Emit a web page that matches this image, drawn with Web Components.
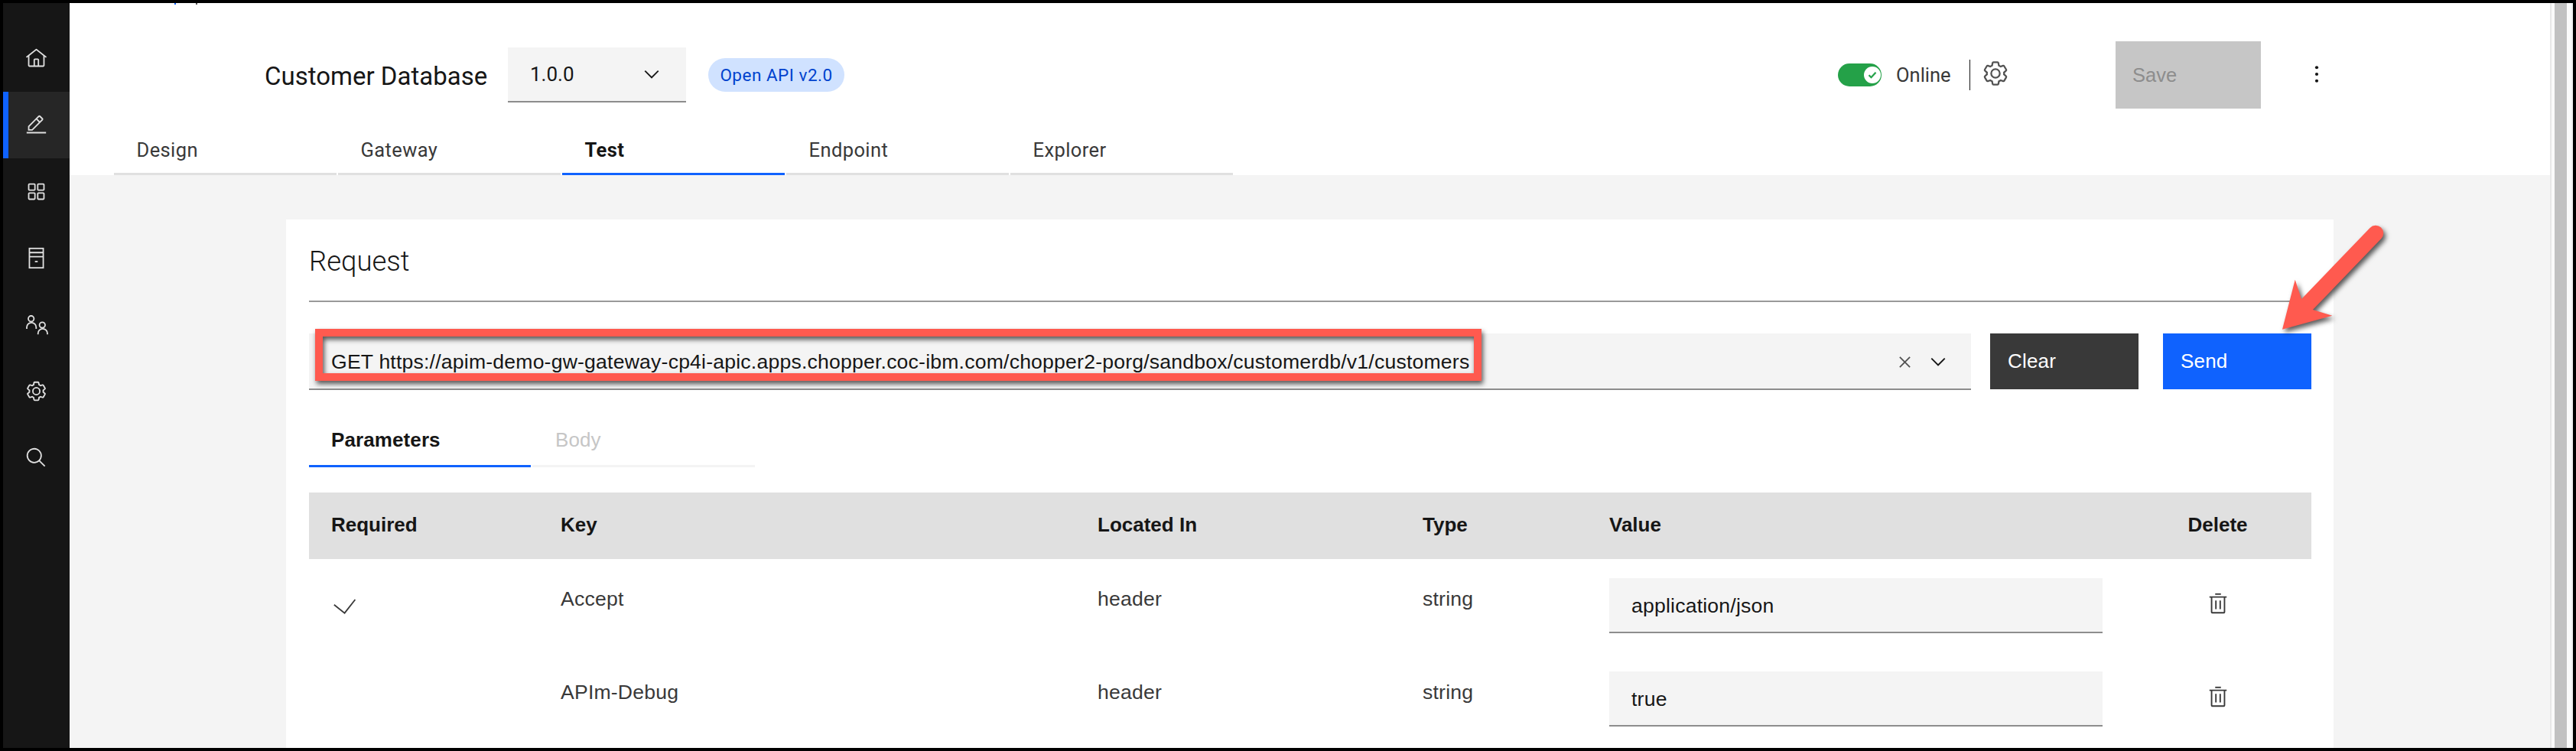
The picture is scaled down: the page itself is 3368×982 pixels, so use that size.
<!doctype html>
<html lang="en">
<head>
<meta charset="utf-8">
<title>Customer Database</title>
<style>
  html, body { margin: 0; padding: 0; background: #000; }
  body { font-family: "Liberation Sans", Arial, sans-serif; color: #161616; overflow: hidden; }
</style>
</head>
<body>
<app-shell>
  <side-nav slot="nav">
    <nav-item><ui-icon name="home" size="29"></ui-icon></nav-item>
    <nav-item active><ui-icon name="edit" size="29"></ui-icon></nav-item>
    <nav-item><ui-icon name="apps" size="29"></ui-icon></nav-item>
    <nav-item><ui-icon name="archive" size="29"></ui-icon></nav-item>
    <nav-item><ui-icon name="users" size="30"></ui-icon></nav-item>
    <nav-item><ui-icon name="settings" size="29"></ui-icon></nav-item>
    <nav-item><ui-icon name="search" size="29"></ui-icon></nav-item>
  </side-nav>

  <api-header slot="header" title="Customer Database" version="1.0.0" badge="Open API v2.0">
    <tab-item>Design</tab-item>
    <tab-item>Gateway</tab-item>
    <tab-item active>Test</tab-item>
    <tab-item>Endpoint</tab-item>
    <tab-item>Explorer</tab-item>
  </api-header>

  <request-card title="Request">
    <request-bar url="GET https://apim-demo-gw-gateway-cp4i-apic.apps.chopper.coc-ibm.com/chopper2-porg/sandbox/customerdb/v1/customers"></request-bar>
    <sub-tabs></sub-tabs>
    <param-table>
      <param-row required key="Accept" location="header" type="string" value="application/json"></param-row>
      <param-row key="APIm-Debug" location="header" type="string" value="true"></param-row>
    </param-table>
  </request-card>

  <annotation-box></annotation-box>
  <annotation-arrow></annotation-arrow>
</app-shell>

<script>
const ICONS = {
  home: '<path d="M16.6123,2.2138a1.01,1.01,0,0,0-1.2427,0L1,13.4194l1.2427,1.5717L4,13.6209V26a2.0041,2.0041,0,0,0,2,2H26a2.0037,2.0037,0,0,0,2-2V13.63L29.7573,15,31,13.4282ZM18,26H14V18h4Zm2,0V18a2.0023,2.0023,0,0,0-2-2H14a2.002,2.002,0,0,0-2,2v8H6V12.0615l10-7.79,10,7.8005V26Z"/>',
  edit: '<path d="M2 26H30V28H2zM25.4 9c.8-.8.8-2 0-2.8l-3.6-3.6c-.8-.8-2-.8-2.8 0l-15 15V24h6.4L25.4 9zM20.4 4L24 7.6l-3 3L17.4 7 20.4 4zM6 22v-3.6l10-10 3.6 3.6-10 10H6z"/>',
  apps: '<g fill="none" stroke="currentColor" stroke-width="2"><rect x="5" y="5" width="9" height="9" rx="1"/><rect x="18" y="5" width="9" height="9" rx="1"/><rect x="5" y="18" width="9" height="9" rx="1"/><rect x="18" y="18" width="9" height="9" rx="1"/></g>',
  archive: '<g fill="none" stroke="currentColor" stroke-width="2"><rect x="6" y="2" width="20" height="28"/><path d="M6 8H26M6 14H26"/></g><path d="M14 20H18V22H14z"/>',
  users: '<g fill="none" stroke="currentColor" stroke-width="1.8"><circle cx="7.7" cy="6.7" r="3.7"/><path d="M2 20v-2a6.1 6 0 0 1 12.3 0v2"/><circle cx="22.3" cy="15" r="3.7"/><path d="M16.7 27.3v-1.3a6.1 6 0 0 1 12.3 0v1.3"/></g>',
  settings: '<path d="M27,16.76c0-.25,0-.5,0-.76s0-.51,0-.77l1.92-1.68A2,2,0,0,0,29.3,11L26.94,7a2,2,0,0,0-1.73-1,2,2,0,0,0-.64.1l-2.43.82a11.35,11.35,0,0,0-1.31-.75l-.51-2.52a2,2,0,0,0-2-1.61H13.64a2,2,0,0,0-2,1.61l-.51,2.52a11.48,11.48,0,0,0-1.32.75L7.43,6.06A2,2,0,0,0,6.79,6,2,2,0,0,0,5.06,7L2.7,11a2,2,0,0,0,.41,2.51L5,15.24c0,.25,0,.5,0,.76s0,.51,0,.77L3.11,18.45A2,2,0,0,0,2.7,21L5.06,25a2,2,0,0,0,1.73,1,2,2,0,0,0,.64-.1l2.43-.82a11.35,11.35,0,0,0,1.31.75l.51,2.52a2,2,0,0,0,2,1.61h4.72a2,2,0,0,0,2-1.61l.51-2.52a11.48,11.48,0,0,0,1.32-.75l2.42.82a2,2,0,0,0,.64.1,2,2,0,0,0,1.73-1L29.3,21a2,2,0,0,0-.41-2.51ZM25.21,24l-3.43-1.16a8.86,8.86,0,0,1-2.71,1.57L18.36,28H13.64l-.71-3.55a9.36,9.36,0,0,1-2.7-1.57L6.79,24,4.43,20l2.72-2.4a8.9,8.9,0,0,1,0-3.13L4.43,12,6.79,8l3.43,1.16a8.86,8.86,0,0,1,2.71-1.57L13.64,4h4.72l.71,3.55a9.36,9.36,0,0,1,2.7,1.57L25.21,8,27.57,12l-2.72,2.4a8.9,8.9,0,0,1,0,3.13L27.57,20Z"/><path d="M16,22a6,6,0,1,1,6-6A5.94,5.94,0,0,1,16,22Zm0-10a3.91,3.91,0,0,0-4,4,3.91,3.91,0,0,0,4,4,3.91,3.91,0,0,0,4-4A3.91,3.91,0,0,0,16,12Z"/>',
  search: '<path d="M29,27.5859l-7.5521-7.5521a11.0177,11.0177,0,1,0-1.4141,1.4141L27.5859,29ZM4,13a9,9,0,1,1,9,9A9.01,9.01,0,0,1,4,13Z"/>',
  chevron: '<path d="M16 22L6 12 7.4 10.6 16 19.2 24.6 10.6 26 12z"/>',
  close: '<path d="M24 9.4L22.6 8 16 14.6 9.4 8 8 9.4 14.6 16 8 22.6 9.4 24 16 17.4 22.6 24 24 22.6 17.4 16 24 9.4z"/>',
  tick: '<path d="M7 16.5L13 22.5 25 9.5" fill="none" stroke="currentColor" stroke-width="4.5"/>',
  check: '<path d="M3.4 14L15.6 23.7 27.9 8" fill="none" stroke="currentColor" stroke-width="1.6"/>',
  trash: '<path d="M12 12H14V24H12zM18 12H20V24H18z"/><path d="M4 6V8H6V28a2 2 0 0 0 2 2H24a2 2 0 0 0 2-2V8h2V6ZM8 28V8H24V28Z"/><path d="M12 2H20V4H12z"/>',
  kebab: '<circle cx="16" cy="6" r="2.4"/><circle cx="16" cy="16" r="2.4"/><circle cx="16" cy="26" r="2.4"/>',
}

class UiIcon extends HTMLElement {
  connectedCallback() {
    const size = this.getAttribute('size') || 32
    const vb = this.getAttribute('name') === 'users' ? '0 0 30 30' : '0 0 32 32'
    this.attachShadow({ mode: 'open' }).innerHTML = `
      <style>
        :host { display: inline-flex; width: ${size}px; height: ${size}px; flex: none; }
        svg { width: 100%; height: 100%; fill: currentColor; display: block; }
      </style>
      <svg viewBox="${vb}" aria-hidden="true">${ICONS[this.getAttribute('name')] || ''}</svg>`
  }
}

const shellTemplate = document.createElement('template')
shellTemplate.innerHTML = `
  <style>
    :host {
      display: flex;
      position: relative;
      box-sizing: border-box;
      width: 3368px;
      height: 982px;
      border: 4px solid #000;
      overflow: hidden;
    }
    .main { flex: 1; min-width: 0; display: flex; flex-direction: column; background: #f4f4f4; }
    .content { flex: 1; min-height: 0; overflow: hidden; padding: 58px 283px 0; }
    .scrollbar {
      flex: none;
      box-sizing: border-box;
      width: 30px;
      padding: 0 6px;
      background: #fafafa;
      border-left: 2px solid #e8e8e8;
      border-right: 2px solid #efefef;
    }
    .thumb { height: 100%; margin-left: -2px; width: 16px; background: #c1c1c1; }
  </style>
  <slot name="nav"></slot>
  <div class="main">
    <slot name="header"></slot>
    <div class="content"><slot></slot></div>
  </div>
  <div class="scrollbar"><div class="thumb"></div></div>
`
class AppShell extends HTMLElement {
  constructor() {
    super()
    this.attachShadow({ mode: 'open' }).appendChild(shellTemplate.content.cloneNode(true))
  }
}

const sideNavTemplate = document.createElement('template')
sideNavTemplate.innerHTML = `
  <style>
    :host {
      display: flex;
      flex-direction: column;
      flex: none;
      box-sizing: border-box;
      width: 87px;
      padding-top: 29px;
      background: #161616;
      color: #e0e0e0;
    }
  </style>
  <slot></slot>
`
class SideNav extends HTMLElement {
  constructor() {
    super()
    this.attachShadow({ mode: 'open' }).appendChild(sideNavTemplate.content.cloneNode(true))
  }
}

const navItemTemplate = document.createElement('template')
navItemTemplate.innerHTML = `
  <style>
    :host {
      display: flex;
      align-items: center;
      justify-content: center;
      box-sizing: border-box;
      height: 87px;
      border-left: 7px solid transparent;
      border-right: 7px solid transparent;
    }
    :host([active]) { background: #262626; border-left-color: #0f62fe; border-right-color: #262626; }
  </style>
  <slot></slot>
`
class NavItem extends HTMLElement {
  constructor() {
    super()
    this.attachShadow({ mode: 'open' }).appendChild(navItemTemplate.content.cloneNode(true))
  }
}

const headerTemplate = document.createElement('template')
headerTemplate.innerHTML = `
  <style>
    :host {
      display: block;
      position: relative;
      flex: none;
      height: 225px;
      box-sizing: border-box;
      padding-top: 50px;
      background: #fff;
      font-family: Roboto, "Liberation Sans", sans-serif;
    }
    .cut { position: absolute; top: 0; height: 2px; }
    .top { display: flex; align-items: center; height: 88px; padding: 0 291px 0 255px; }
    h1 { margin: 2px 0 0; width: 318px; font-size: 33px; font-weight: 400; color: #161616; white-space: nowrap; letter-spacing: 0; }
    .select {
      display: flex;
      align-items: center;
      justify-content: space-between;
      box-sizing: border-box;
      width: 233px;
      height: 72px;
      padding: 0 30px 0 29px;
      background: #f4f4f4;
      border-bottom: 2px solid #8d8d8d;
      font-size: 26px;
      color: #161616;
    }
    .badge {
      margin-left: 29px;
      display: flex;
      align-items: center;
      justify-content: center;
      width: 178px;
      height: 44px;
      border-radius: 22px;
      background: #d0e2ff;
      color: #0043ce;
      font-size: 22.5px;
      letter-spacing: 0.5px;
    }
    .right { margin-left: auto; display: flex; align-items: center; }
    .toggle {
      display: flex;
      align-items: center;
      justify-content: flex-end;
      box-sizing: border-box;
      width: 57px;
      height: 30px;
      padding-right: 0;
      border-radius: 15px;
      background: #24a148;
    }
    .knob {
      display: flex;
      align-items: center;
      justify-content: center;
      width: 22px;
      height: 22px;
      margin-right: 1px;
      border-radius: 50%;
      background: #fff;
      color: #24a148;
    }
    .status { box-sizing: border-box; width: 115px; padding-left: 19px; font-size: 25.5px; color: #393939; white-space: nowrap; }
    .divider { width: 1px; height: 40px; background: #161616; }
    .gear { margin-left: 15px; color: #525252; margin-top: -4px; }
    .save {
      margin-left: 139px;
      display: flex;
      align-items: center;
      box-sizing: border-box;
      width: 190px;
      height: 88px;
      padding-left: 22px;
      background: #c6c6c6;
      color: #8d8d8d;
      font-family: "Liberation Sans", sans-serif;
      font-size: 25.5px;
    }
    .kebab { margin-left: 59px; color: #161616; margin-top: -2px; }
    .tabs { display: flex; gap: 2px; margin: 23px 0 0 58px; }
  </style>
  <span class="cut" style="left:137px;width:2px;background:#0f62fe"></span>
  <span class="cut" style="left:165px;width:2px;background:#525252"></span>
  <div class="top">
    <h1></h1>
    <div class="select"><span class="version"></span><ui-icon name="chevron" size="30"></ui-icon></div>
    <div class="badge"></div>
    <div class="right">
      <div class="toggle"><span class="knob"><ui-icon name="tick" size="16"></ui-icon></span></div>
      <div class="status">Online</div>
      <div class="divider"></div>
      <ui-icon class="gear" name="settings" size="36"></ui-icon>
      <div class="save">Save</div>
      <ui-icon class="kebab" name="kebab" size="28"></ui-icon>
    </div>
  </div>
  <div class="tabs"><slot></slot></div>
`
class ApiHeader extends HTMLElement {
  constructor() {
    super()
    this.attachShadow({ mode: 'open' }).appendChild(headerTemplate.content.cloneNode(true))
  }

  connectedCallback() {
    this.shadowRoot.querySelector('h1').textContent = this.getAttribute('title')
    this.shadowRoot.querySelector('.version').textContent = this.getAttribute('version')
    this.shadowRoot.querySelector('.badge').textContent = this.getAttribute('badge')
    this.removeAttribute('title')
  }
}

const tabTemplate = document.createElement('template')
tabTemplate.innerHTML = `
  <style>
    :host {
      display: flex;
      align-items: center;
      box-sizing: border-box;
      width: 291px;
      height: 64px;
      padding: 1px 0 0 29.5px;
      border-bottom: 3px solid #e0e0e0;
      color: #393939;
      font-size: 25.5px;
      letter-spacing: 0.4px;
    }
    :host([active]) { border-bottom-color: #0f62fe; color: #161616; font-weight: 700; }
  </style>
  <slot></slot>
`
class TabItem extends HTMLElement {
  constructor() {
    super()
    this.attachShadow({ mode: 'open' }).appendChild(tabTemplate.content.cloneNode(true))
  }
}

const cardTemplate = document.createElement('template')
cardTemplate.innerHTML = `
  <style>
    :host { display: block; box-sizing: border-box; height: 720px; padding: 0 29px 0 30px; background: #fff; }
    h2 {
      margin: 0;
      box-sizing: border-box;
      height: 108px;
      padding-top: 35px;
      border-bottom: 2px solid #999;
      font-family: Roboto, "Liberation Sans", sans-serif;
      font-size: 36.5px;
      line-height: 40px;
      font-weight: 300;
      color: #161616;
    }
  </style>
  <h2></h2>
  <slot></slot>
`
class RequestCard extends HTMLElement {
  constructor() {
    super()
    this.attachShadow({ mode: 'open' }).appendChild(cardTemplate.content.cloneNode(true))
  }

  connectedCallback() {
    this.shadowRoot.querySelector('h2').textContent = this.getAttribute('title')
    this.removeAttribute('title')
  }
}

const barTemplate = document.createElement('template')
barTemplate.innerHTML = `
  <style>
    :host { display: flex; align-items: flex-start; margin-top: 41px; font-size: 26.6px; letter-spacing: 0.2px; }
    .field {
      flex: 1;
      display: flex;
      align-items: center;
      box-sizing: border-box;
      height: 74px;
      padding: 2px 28px 0 29px;
      background: #f4f4f4;
      border-bottom: 2px solid #8d8d8d;
      color: #161616;
    }
    .url { flex: 1; white-space: nowrap; }
    .close { color: #525252; margin-right: 14px; }
    button {
      all: unset;
      box-sizing: border-box;
      width: 194px;
      height: 73px;
      padding-left: 23px;
      font-size: 26px;
      color: #fff;
    }
    .clear { margin-left: 25px; background: #393939; }
    .send { margin-left: 32px; background: #0f62fe; }
  </style>
  <div class="field">
    <span class="url"></span>
    <ui-icon class="close" name="close" size="29"></ui-icon>
    <ui-icon name="chevron" size="30"></ui-icon>
  </div>
  <button class="clear">Clear</button>
  <button class="send">Send</button>
`
class RequestBar extends HTMLElement {
  constructor() {
    super()
    this.attachShadow({ mode: 'open' }).appendChild(barTemplate.content.cloneNode(true))
  }

  connectedCallback() {
    this.shadowRoot.querySelector('.url').textContent = this.getAttribute('url')
  }
}

const subTabsTemplate = document.createElement('template')
subTabsTemplate.innerHTML = `
  <style>
    :host { display: flex; gap: 2px; margin-top: 35px; font-size: 26px; letter-spacing: 0.1px; }
    div {
      display: flex;
      align-items: center;
      box-sizing: border-box;
      width: 290px;
      height: 66px;
      padding: 0 0 2px 29px;
    }
    .on { border-bottom: 3px solid #0f62fe; font-weight: 700; color: #161616; }
    .off { border-bottom: 3px solid #f4f4f4; color: #c6c6c6; width: 291px; padding-left: 30px; }
  </style>
  <div class="on">Parameters</div>
  <div class="off">Body</div>
`
class SubTabs extends HTMLElement {
  constructor() {
    super()
    this.attachShadow({ mode: 'open' }).appendChild(subTabsTemplate.content.cloneNode(true))
  }
}

const COLUMNS = '300px 702px 425px 244px 756px 79px'

const tableTemplate = document.createElement('template')
tableTemplate.innerHTML = `
  <style>
    :host { display: block; margin-top: 33px; font-size: 26px; }
    .head {
      display: grid;
      grid-template-columns: ${COLUMNS};
      align-items: center;
      height: 87px;
      padding: 0 0 3px 29px;
      box-sizing: border-box;
      background: #e0e0e0;
      color: #161616;
      font-weight: 700;
    }
    .head span:last-child { text-align: center; }
  </style>
  <div class="head">
    <span>Required</span><span>Key</span><span>Located In</span><span>Type</span><span>Value</span><span>Delete</span>
  </div>
  <slot></slot>
`
class ParamTable extends HTMLElement {
  constructor() {
    super()
    this.attachShadow({ mode: 'open' }).appendChild(tableTemplate.content.cloneNode(true))
  }
}

const rowTemplate = document.createElement('template')
rowTemplate.innerHTML = `
  <style>
    :host {
      display: grid;
      grid-template-columns: ${COLUMNS};
      box-sizing: border-box;
      height: 122px;
      padding: 25px 0 0 29px;
      color: #393939;
      font-size: 26.6px;
      letter-spacing: 0.2px;
    }
    .text { padding-top: 12px; line-height: 30px; }
    .req { padding-top: 19px; color: #393939; }
    .value {
      display: flex;
      align-items: center;
      box-sizing: border-box;
      width: 645px;
      height: 72px;
      padding: 2px 0 0 29px;
      background: #f4f4f4;
      border-bottom: 2px solid #8d8d8d;
      color: #161616;
    }
    .del { display: flex; justify-content: center; padding-top: 18px; color: #393939; }
  </style>
  <div class="req"></div>
  <div class="text key"></div>
  <div class="text location"></div>
  <div class="text type"></div>
  <div><div class="value"></div></div>
  <div class="del"><ui-icon name="trash" size="30"></ui-icon></div>
`
class ParamRow extends HTMLElement {
  constructor() {
    super()
    this.attachShadow({ mode: 'open' }).appendChild(rowTemplate.content.cloneNode(true))
  }

  connectedCallback() {
    const root = this.shadowRoot
    for (const name of ['key', 'location', 'type', 'value']) {
      root.querySelector('.' + name).textContent = this.getAttribute(name)
    }
    if (this.hasAttribute('required')) {
      root.querySelector('.req').innerHTML = '<ui-icon name="check" size="36"></ui-icon>'
    }
  }
}

// callouts drawn over the screenshot, these sit on top of everything so absolute is fine
const boxTemplate = document.createElement('template')
boxTemplate.innerHTML = `
  <style>
    :host {
      position: absolute;
      left: 408px;
      top: 426px;
      box-sizing: border-box;
      width: 1525px;
      height: 68px;
      border: 10px solid #ff5a4f;
      filter: drop-shadow(2px 4px 3px rgba(0, 0, 0, 0.65));
    }
  </style>
`
class AnnotationBox extends HTMLElement {
  constructor() {
    super()
    this.attachShadow({ mode: 'open' }).appendChild(boxTemplate.content.cloneNode(true))
  }
}

const arrowTemplate = document.createElement('template')
arrowTemplate.innerHTML = `
  <style>
    :host { position: absolute; left: 2966px; top: 286px; width: 170px; height: 170px; }
    svg { display: block; width: 100%; height: 100%; overflow: visible; filter: drop-shadow(3px 4px 3px rgba(0, 0, 0, 0.65)); }
  </style>
  <svg viewBox="0 0 170 170" aria-hidden="true">
    <path d="M136 15L46.5 108" fill="none" stroke="#ff5a4f" stroke-width="20.5" stroke-linecap="round"/>
    <path d="M14 140.7L30.7 75.7 39 100.7 54 115 79.3 122.7z" fill="#ff5a4f"/>
  </svg>
`
class AnnotationArrow extends HTMLElement {
  constructor() {
    super()
    this.attachShadow({ mode: 'open' }).appendChild(arrowTemplate.content.cloneNode(true))
  }
}

customElements.define('ui-icon', UiIcon)
customElements.define('app-shell', AppShell)
customElements.define('side-nav', SideNav)
customElements.define('nav-item', NavItem)
customElements.define('api-header', ApiHeader)
customElements.define('tab-item', TabItem)
customElements.define('request-card', RequestCard)
customElements.define('request-bar', RequestBar)
customElements.define('sub-tabs', SubTabs)
customElements.define('param-table', ParamTable)
customElements.define('param-row', ParamRow)
customElements.define('annotation-box', AnnotationBox)
customElements.define('annotation-arrow', AnnotationArrow)
</script>
</body>
</html>
